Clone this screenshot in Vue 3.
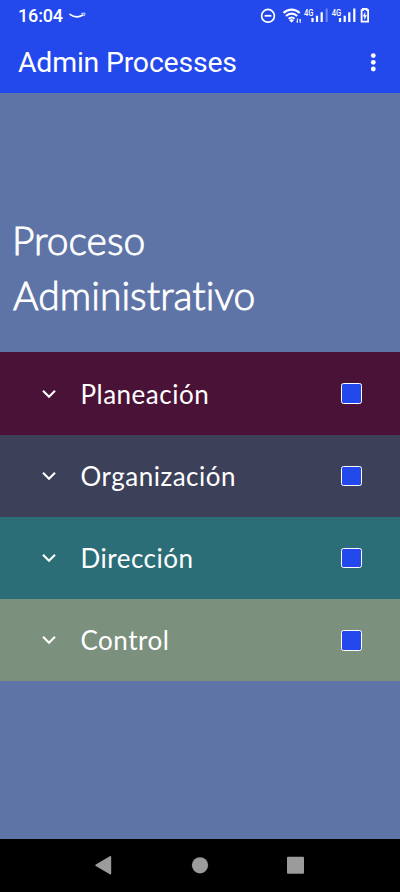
<script setup>
const items = [
  { name: 'Planeación', tone: 'wine' },
  { name: 'Organización', tone: 'slate' },
  { name: 'Dirección', tone: 'teal' },
  { name: 'Control', tone: 'sage' },
]
</script>

<template>
  <div class="screen">
    <div class="status">
      <span class="time">16:04</span>
      <svg class="smile" width="18" height="8" viewBox="0 0 18 8" fill="none" stroke="#fff" stroke-linecap="round">
        <path d="M1 2.3C5 5.4 10 5.4 14 3" stroke-width="1.5" />
        <path d="M12.6 1.6C14 1 15.6 .9 15.9 1.3C16.2 1.8 15.8 2.9 15.1 3.8" stroke-width="1" />
      </svg>
      <svg class="indicators" width="115" height="32" viewBox="0 0 115 32" fill="none" stroke="#fff">
        <circle cx="13" cy="15.8" r="6.4" stroke-width="1.7" />
        <path d="M9.6 15.8H16.4" stroke-width="1.8" />
        <path d="M28.5 13C33.2 8.5 40 8.5 44.7 13M31 16C34.3 12.9 38.9 12.9 42.2 16M33.6 18.8C35.5 17.2 37.7 17.2 39.6 18.8" stroke-width="2.1" />
        <path d="M34.1 20.1Q36.6 18.3 39 20.1L36.6 22.7Z" fill="#fff" stroke="none" />
        <path d="M42.4 18.5V22.5M41.5 21.5L42.4 22.5M45.2 23V19M44.3 20H46" stroke-width="1" />
        <g transform="translate(3 0)">
          <g class="network" fill="#fff" stroke="none">
            <text x="46" y="16" textLength="9.5" lengthAdjust="spacingAndGlyphs">4G</text>
            <text x="73.8" y="16" textLength="9.5" lengthAdjust="spacingAndGlyphs">4G</text>
          </g>
          <path d="M54.5 18V22M59 15.8V22M63.7 12.3V22" stroke-width="2.2" />
          <path d="M68.7 8.6V22" stroke-width="2" opacity=".35" />
          <path d="M82 18V22M86.7 15.8V22M91.3 12.3V22M96.3 8.6V22" stroke-width="2.2" />
          <path d="M103.6 10.2H104.9V9H108.6V10.2H110.1V21.6H103.6V10.2Z" stroke-width="1.8" />
          <path d="M107.3 11.8L104.6 16.6H106.3V20L109.1 15.2H107.3Z" fill="#fff" stroke="none" />
        </g>
      </svg>
    </div>
    <header class="toolbar">
      <h1>Admin Processes</h1>
      <svg width="6" height="20" viewBox="0 0 6 20" fill="#fff">
        <circle cx="3.3" cy="2.6" r="2.4" /><circle cx="3.3" cy="9.3" r="2.4" /><circle cx="3.3" cy="16" r="2.4" />
      </svg>
    </header>
    <main>
      <h2><span class="first">Proceso</span><span class="second">Administrativo</span></h2>
      <div class="list">
        <div v-for="item in items" :key="item.name" class="row" :class="item.tone">
          <svg class="chevron" width="16" height="12" viewBox="0 0 16 12" fill="none" stroke="#fff" stroke-width="2.1">
            <path d="M2 2.8L8 8.8L14 2.8" />
          </svg>
          <span class="label">{{ item.name }}</span>
          <span class="check"></span>
        </div>
      </div>
    </main>
    <nav>
      <svg width="400" height="53" viewBox="0 0 400 53" fill="#9b9b9b">
        <path d="M95.7 25.5L109.8 17.2Q111.2 16.5 111.2 18V34.5Q111.2 36 109.8 35.3L95.7 27Q94.7 26.2 95.7 25.5Z" />
        <circle cx="200" cy="26.3" r="8.1" />
        <rect x="287" y="17.8" width="17" height="17" rx="1" />
      </svg>
    </nav>
  </div>
</template>

<style>
body { margin: 0; overflow: hidden; }
</style>

<style scoped>
.screen {
  width: 400px;
  height: 892px;
  display: flex;
  flex-direction: column;
  background: #5e74a6;
  color: #fff;
  font-family: Roboto, sans-serif;
}
.status {
  height: 32px;
  display: flex;
  align-items: center;
  background: #2348ec;
  padding-left: 18px;
}
.time { width: 51px; font-size: 18px; font-weight: 500; line-height: 32px; letter-spacing: -.15px; }
.smile { display: block; }
.indicators { display: block; margin-left: 168px; overflow: visible; }
.network { font: 500 9.5px Roboto, sans-serif; }
.toolbar {
  box-sizing: border-box;
  height: 61.3px;
  display: flex;
  align-items: center;
  justify-content: space-between;
  padding: 0 24px 0 18px;
  background: #2348ec;
}
h1 { margin: 0; padding-top: 1px; font-size: 28.4px; font-weight: 400; line-height: 60px; letter-spacing: -.18px; }
main { flex: 1; min-height: 0; }
h2 {
  display: flex;
  flex-direction: column;
  box-sizing: border-box;
  height: 259.1px;
  margin: 0;
  padding: 120px 0 0 12px;
  font: 300 39px/54.5px Lato, sans-serif;
  font-variant-ligatures: none;
  -webkit-text-stroke: .9px #fff;
  stroke-linejoin: round;
  white-space: nowrap;
}
.second { padding-left: 1px; letter-spacing: .05px; }
.row {
  height: 82.25px;
  display: flex;
  align-items: center;
  box-sizing: border-box;
  padding: 0 38.5px 0 41px;
}
.wine { background: #4b1237; }
.slate { background: #3d4059; }
.teal { background: #2b6e78; }
.sage { background: #7b907d; }
.label {
  flex: 1;
  margin-left: 23.5px;
  font: 400 26px/36px Lato, sans-serif;
  letter-spacing: .5px;
}
.check {
  box-sizing: border-box;
  width: 20.5px;
  height: 20.5px;
  border: 1.5px solid #fff;
  border-radius: 2.5px;
  background: #2348ec;
}
nav { height: 53px; background: #000; }
nav svg { display: block; }
</style>
